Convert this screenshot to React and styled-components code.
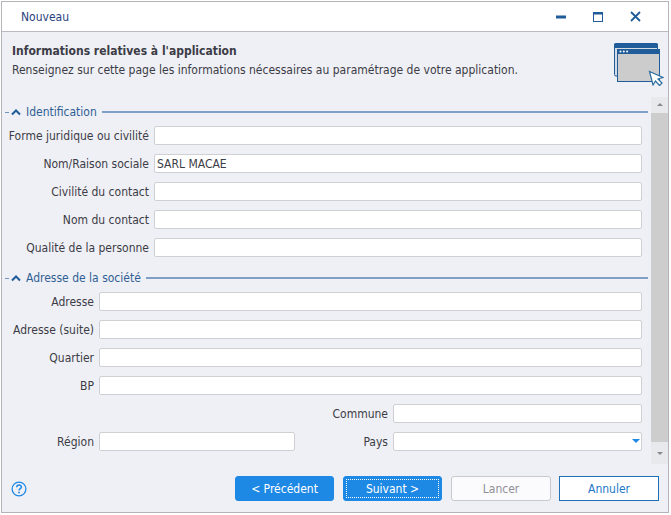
import styled, { createGlobalStyle } from 'styled-components';

const sectionOne = [
  { label: 'Forme juridique ou civilité', value: '' },
  { label: 'Nom/Raison sociale', value: 'SARL MACAE' },
  { label: 'Civilité du contact', value: '' },
  { label: 'Nom du contact', value: '' },
  { label: 'Qualité de la personne', value: '' },
];

const sectionTwo = ['Adresse', 'Adresse (suite)', 'Quartier', 'BP'];

function Collapse() {
  return (
    <svg width="12" height="8" viewBox="0 0 12 8">
      <path d="M2 6.5 L6 2.5 L10 6.5" fill="none" stroke="#1f5c99" strokeWidth="2" />
    </svg>
  );
}

function WindowsIcon() {
  return (
    <svg width="50" height="43" viewBox="0 0 50 43">
      <rect x="0.5" y="1" width="43" height="32" rx="1.5" fill="#d5dbe3" stroke="#1f5c99" />
      <rect x="0" y="0" width="44" height="5" rx="1.5" fill="#1f5c99" />
      <rect x="3.5" y="6.5" width="42" height="32" fill="#cccccc" stroke="#1f5c99" />
      <rect x="3" y="6" width="43" height="5" fill="#1f5c99" />
      <circle cx="6.5" cy="8.5" r="1" fill="#fff" />
      <circle cx="9.8" cy="8.5" r="1" fill="#fff" />
      <circle cx="13.1" cy="8.5" r="1" fill="#fff" />
      <path d="M35.5 28.5 L39 42 L41.5 38 L45.5 42.5 L48 40 L44 36 L49 34.5 Z" fill="#fff" stroke="#2a6d9e" strokeWidth="1.2" />
    </svg>
  );
}

function App() {
  return (
    <>
      <GlobalStyle />
      <Dialog>
        <TitleBar>
          <Title>Nouveau</Title>
          <WindowButtons>
            <svg width="10" height="4" viewBox="0 0 10 4"><rect y="0.5" width="10" height="3" fill="#1f5c99" /></svg>
            <svg width="10" height="10" viewBox="0 0 10 10">
              <rect x="0.5" y="0.5" width="9" height="9" fill="none" stroke="#1f5c99" />
              <rect x="0" y="0" width="10" height="2.5" fill="#1f5c99" />
            </svg>
            <svg width="11" height="11" viewBox="0 0 11 11">
              <path d="M1 1 L10 10 M10 1 L1 10" stroke="#1f5c99" strokeWidth="1.8" fill="none" />
            </svg>
          </WindowButtons>
        </TitleBar>

        <Header>
          <div>
            <HeaderTitle>Informations relatives à l'application</HeaderTitle>
            <HeaderText>Renseignez sur cette page les informations nécessaires au paramétrage de votre application.</HeaderText>
          </div>
          <WindowsIcon />
        </Header>

        <Body>
          <Form>
            <SectionHead>
              <Dash />
              <Collapse />
              <SectionName>Identification</SectionName>
              <Line />
            </SectionHead>
            <Rows>
              {sectionOne.map((row) => (
                <Row key={row.label} $labelWidth={144}>
                  <Label>{row.label}</Label>
                  <Field>{row.value}</Field>
                </Row>
              ))}
            </Rows>

            <SectionHead $second>
              <Dash />
              <Collapse />
              <SectionName>Adresse de la société</SectionName>
              <Line />
            </SectionHead>
            <Rows>
              {sectionTwo.map((label) => (
                <Row key={label} $labelWidth={89}>
                  <Label>{label}</Label>
                  <Field />
                </Row>
              ))}
              <SplitRow>
                <span />
                <span />
                <Label>Commune</Label>
                <Field />
              </SplitRow>
              <SplitRow>
                <Label>Région</Label>
                <Field />
                <Label>Pays</Label>
                <Field>
                  <SelectArrow />
                </Field>
              </SplitRow>
            </Rows>
          </Form>

          <ScrollBar>
            <ScrollEnd><ArrowUp /></ScrollEnd>
            <ScrollThumb />
            <ScrollEnd $tall><ArrowDown /></ScrollEnd>
          </ScrollBar>
        </Body>

        <Footer>
          <svg width="16" height="16" viewBox="0 0 16 16">
            <circle cx="8" cy="8" r="6.9" fill="none" stroke="#1e88e5" strokeWidth="1.3" />
            <path d="M5.7 6.2 C5.8 3.4 10.4 3.4 10.4 6 C10.4 7.7 8 7.7 8 9.6" fill="none" stroke="#1e88e5" strokeWidth="1.5" />
            <rect x="7.2" y="10.7" width="1.6" height="1.7" fill="#1e88e5" />
          </svg>
          <Buttons>
            <PrimaryButton>&lt; Précédent</PrimaryButton>
            <PrimaryButton $focused><span>Suivant &gt;</span></PrimaryButton>
            <DisabledButton>Lancer</DisabledButton>
            <CancelButton>Annuler</CancelButton>
          </Buttons>
        </Footer>
      </Dialog>
    </>
  );
}

export default App;

const GlobalStyle = createGlobalStyle`
  html, body {
    margin: 0;
    padding: 0;
    background: #ffffff;
  }
  body {
    font-family: "DejaVu Sans Condensed", "Noto Sans", sans-serif;
    font-size: 12px;
    color: #3c3c46;
  }
`;

const Dialog = styled.div`
  box-sizing: border-box;
  width: 668px;
  height: 512px;
  margin-left: 1px;
  margin-top: 1px;
  border: 1px solid #b4b4b8;
  background: #eff0f5;
  display: flex;
  flex-direction: column;
`;

const TitleBar = styled.div`
  box-sizing: border-box;
  height: 30px;
  flex: none;
  background: #ffffff;
  border-bottom: 1px solid #b9bbc0;
  display: flex;
  align-items: center;
  justify-content: space-between;
  padding: 0 27px 0 19px;
`;

const Title = styled.div`
  color: #2a3f7e;
`;

const WindowButtons = styled.div`
  display: flex;
  align-items: center;
  gap: 27px;
`;

const Header = styled.div`
  box-sizing: border-box;
  height: 65px;
  flex: none;
  display: flex;
  justify-content: space-between;
  padding: 11px 4px 0 10px;
`;

const HeaderTitle = styled.div`
  font-weight: 700;
  color: #3c3c46;
  line-height: 15px;
  padding-top: 1px;
`;

const HeaderText = styled.div`
  margin-top: 4px;
  line-height: 15px;
`;

const Body = styled.div`
  flex: 1;
  display: flex;
  min-height: 0;
`;

const Form = styled.div`
  flex: 1;
  min-width: 0;
  padding: 7px 3px 0 3px;
`;

const SectionHead = styled.div`
  display: flex;
  align-items: center;
  height: 16px;
  margin-top: ${(p) => (p.$second ? '13px' : '0')};
  margin-bottom: 6px;
`;

const Dash = styled.div`
  width: 4px;
  height: 1px;
  background: #6f93bd;
  margin-right: 1px;
`;

const SectionName = styled.div`
  color: #2f5f94;
  margin: 0 5px 0 4px;
`;

const Line = styled.div`
  flex: 1;
  height: 2px;
  background: #7f9fc6;
`;

const Rows = styled.div`
  display: flex;
  flex-direction: column;
  gap: 9px;
  padding-right: 6px;
`;

const Row = styled.div`
  display: grid;
  grid-template-columns: ${(p) => p.$labelWidth}px 1fr;
  column-gap: 5px;
  align-items: center;
`;

const SplitRow = styled.div`
  display: grid;
  grid-template-columns: 89px 196px 88px 1fr;
  column-gap: 5px;
  align-items: center;
`;

const Label = styled.div`
  text-align: right;
  white-space: nowrap;
  line-height: 15px;
  padding-top: 2px;
`;

const Field = styled.div`
  position: relative;
  box-sizing: border-box;
  height: 19px;
  background: #ffffff;
  border: 1px solid #cfd0d4;
  border-radius: 2px;
  padding-left: 2px;
  line-height: 19px;
  color: #3c3c46;
`;

const SelectArrow = styled.span`
  position: absolute;
  right: 1px;
  top: 6px;
  border-left: 4px solid transparent;
  border-right: 4px solid transparent;
  border-top: 4px solid #1e88e5;
`;

const ScrollBar = styled.div`
  width: 17px;
  flex: none;
  display: flex;
  flex-direction: column;
`;

const ScrollEnd = styled.div`
  box-sizing: border-box;
  height: ${(p) => (p.$tall ? '22px' : '16px')};
  padding-bottom: ${(p) => (p.$tall ? '0' : '1px')};
  flex: none;
  background: #e8e9ec;
  display: flex;
  align-items: center;
  justify-content: center;
`;

const ScrollThumb = styled.div`
  flex: 1;
  background: #cdcdcd;
`;

const ArrowUp = styled.span`
  border-left: 3px solid transparent;
  border-right: 3px solid transparent;
  border-bottom: 3px solid #8a8a8a;
`;

const ArrowDown = styled.span`
  border-left: 3px solid transparent;
  border-right: 3px solid transparent;
  border-top: 3px solid #8a8a8a;
`;

const Footer = styled.div`
  box-sizing: border-box;
  height: 48px;
  flex: none;
  display: flex;
  align-items: center;
  justify-content: space-between;
  padding: 1px 9px 0 9px;
`;

const Buttons = styled.div`
  display: flex;
  gap: 9px;
`;

const BaseButton = styled.button`
  box-sizing: border-box;
  width: 100px;
  height: 25px;
  padding: 0;
  border-radius: 3px;
  font: inherit;
  cursor: pointer;
`;

const PrimaryButton = styled(BaseButton)`
  width: 99px;
  background: #1e88e5;
  border: 1px solid #1e88e5;
  color: #ffffff;
  padding: ${(p) => (p.$focused ? '2px' : '0')};

  span {
    display: block;
    height: 100%;
    padding-top: 1px;
    line-height: 16px;
    border: 1px dotted #ffffff;
    box-sizing: border-box;
  }
`;

const DisabledButton = styled(BaseButton)`
  background: #fbfbfd;
  border: 1px solid #c8c9cd;
  color: #8f8f95;
`;

const CancelButton = styled(BaseButton)`
  margin-left: -1px;
  background: #ffffff;
  border: 1px solid #1f6fb5;
  color: #1e78c8;
  border-radius: 0;
`;
